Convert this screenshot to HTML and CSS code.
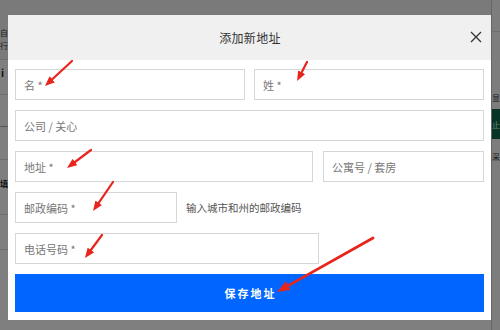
FILE: index.html
```html
<!DOCTYPE html>
<html lang="zh">
<head>
<meta charset="utf-8">
<title>添加新地址</title>
<link rel="stylesheet" href="styles.css">
</head>
<body>
<div class="page">
  <div class="page-main">
    <div class="pm-head"><span class="pm-text">自<br>行</span></div>
    <div class="pm-row pm-bold">i</div>
    <div class="pm-row pm-tall">一</div>
    <div class="pm-row pm-tall2"><span class="pm-strong">填</span></div>
    <div class="pm-row"></div>
  </div>
  <div class="page-side">
    <div class="ps-top"></div>
    <div class="ps-item">显</div>
    <div class="ps-green">止</div>
    <div class="ps-item2">采</div>
  </div>
</div>

<div class="overlay">
  <div class="modal">
    <div class="modal-head">
      <span class="modal-title">添加新地址</span>
      <button class="modal-close" aria-label="关闭">
        <svg width="12" height="12" viewBox="0 0 12 12"><path d="M1 1 L11 11 M11 1 L1 11" stroke="#333" stroke-width="1.3" fill="none"/></svg>
      </button>
    </div>
    <form class="modal-body">
      <div class="row row-two">
        <input class="field" placeholder="名 *">
        <input class="field" placeholder="姓 *">
      </div>
      <div class="row">
        <input class="field" placeholder="公司 / 关心">
      </div>
      <div class="row row-addr">
        <input class="field" placeholder="地址 *">
        <input class="field" placeholder="公寓号 / 套房">
      </div>
      <div class="row row-zip">
        <input class="field field-zip" placeholder="邮政编码 *">
        <span class="hint">输入城市和州的邮政编码</span>
      </div>
      <div class="row">
        <input class="field field-phone" placeholder="电话号码 *">
      </div>
      <button type="button" class="save">保存地址</button>
    </form>
  </div>
</div>

<svg class="annot" viewBox="0 0 500 330" width="500" height="330">
  <defs>
    <marker id="ah" viewBox="0 0 10 8" refX="0" refY="4" markerWidth="10" markerHeight="8" markerUnits="userSpaceOnUse" orient="auto">
      <path d="M0,0 L10,4 L0,8 z" fill="#e8251c"/>
    </marker>
    <marker id="ahb" viewBox="0 0 13 10" refX="0" refY="5" markerWidth="13" markerHeight="10" markerUnits="userSpaceOnUse" orient="auto">
      <path d="M0,0 L13,5 L0,10 z" fill="#e8251c"/>
    </marker>
  </defs>
  <g stroke="#e8251c" stroke-linecap="round" fill="none">
    <line x1="72" y1="61" x2="52.3" y2="79.2" stroke-width="2.2" marker-end="url(#ah)"/>
    <line x1="307" y1="62" x2="301.7" y2="72.2" stroke-width="2.2" marker-end="url(#ah)"/>
    <line x1="91" y1="150" x2="75" y2="162" stroke-width="2.2" marker-end="url(#ah)"/>
    <line x1="113" y1="182" x2="98.7" y2="202.8" stroke-width="2.2" marker-end="url(#ah)"/>
    <line x1="102" y1="235" x2="90.9" y2="250" stroke-width="2.2" marker-end="url(#ah)"/>
    <line x1="373" y1="238" x2="288.3" y2="285.6" stroke-width="2.8" marker-end="url(#ahb)"/>
  </g>
</svg>
</body>
</html>
```
FILE: styles.css
```css
* { box-sizing: border-box; }

html, body {
  margin: 0;
  width: 500px;
  height: 330px;
  overflow: hidden;
}

body {
  position: relative;
  font-family: "Noto Sans CJK SC", "Noto Sans", sans-serif;
  background: #fff;
  color: #333;
}

/* background page (dimmed by overlay) */
.page {
  display: flex;
  height: 330px;
}
.page-main {
  width: 492px;
  display: flex;
  flex-direction: column;
}
.pm-head {
  height: 60px;
  background: #f4f4f4;
  border-bottom: 1px solid #ddd;
  padding-top: 26px;
}
.pm-text {
  display: block;
  font-size: 8px;
  line-height: 13px;
  color: #444;
}
.pm-row {
  height: 35px;
  border-bottom: 1px solid #ddd;
  font-size: 8px;
  color: #222;
}
.pm-bold { font-weight: bold; font-size: 10px; padding: 5px 0 0 1px; }
.pm-tall { height: 65px; padding-top: 26px; color: #888; }
.pm-tall2 { height: 55px; padding-top: 18px; }
.pm-strong { font-weight: bold; }
.page-side {
  flex: 1;
  border-left: 1px solid #ccc;
  background: #fafafa;
  display: flex;
  flex-direction: column;
}
.ps-top { height: 32px; border-bottom: 1px solid #ddd; }
.ps-item { font-size: 8px; padding-top: 60px; color: #333; }
.ps-green {
  margin-top: 6px;
  height: 30px;
  background: #0c6b4f;
  color: #dfe;
  font-size: 8px;
  padding-top: 10px;
}
.ps-item2 { font-size: 8px; padding-top: 12px; color: #333; }

/* overlay + modal */
.overlay {
  position: fixed;
  inset: 0;
  background: rgba(0, 0, 0, 0.5);
  padding: 15px 9px 0 8px;
}
.modal {
  width: 483px;
  height: 305px;
  background: #fff;
  position: relative;
}
.modal-head {
  height: 45px;
  background: #f0f0f0;
  display: flex;
  align-items: center;
  justify-content: center;
}
.modal-title {
  font-size: 12px;
  letter-spacing: 0.3px;
  color: #333;
  margin-left: 1px;
}
.modal-close {
  position: absolute;
  right: 9px;
  top: 16px;
  width: 12px;
  height: 12px;
  padding: 0;
  border: 0;
  background: none;
  display: flex;
}

.modal-body {
  margin: 0;
  padding: 9px 7px 8px;
  display: flex;
  flex-direction: column;
  gap: 10px;
}
.row { display: flex; }
.row-two {
  display: grid;
  grid-template-columns: 1fr 1fr;
  column-gap: 9px;
}
.row-addr {
  display: grid;
  grid-template-columns: 298px 1fr;
  column-gap: 10px;
}
.row-zip { align-items: center; }

.field {
  display: block;
  width: 100%;
  height: 31px;
  border: 1px solid #d6d6d6;
  border-radius: 0;
  padding: 0 8px;
  font-family: "Noto Sans CJK SC", "Noto Sans", sans-serif;
  font-size: 11px;
  color: #333;
  background: #fff;
  outline: none;
}
.field::placeholder { color: #777; }
.field-zip { width: 162px; }
.field-phone { width: 304px; }

.hint {
  margin-left: 9px;
  font-size: 10.5px;
  color: #555;
}

.save {
  height: 38px;
  border: 0;
  background: #0066ff;
  color: #fff;
  font-family: "Noto Sans CJK SC", "Noto Sans", sans-serif;
  font-weight: bold;
  font-size: 11px;
  letter-spacing: 2px;
  padding: 0 0 0 2px;
}

.annot {
  position: absolute;
  left: 0;
  top: 0;
  pointer-events: none;
}
```
